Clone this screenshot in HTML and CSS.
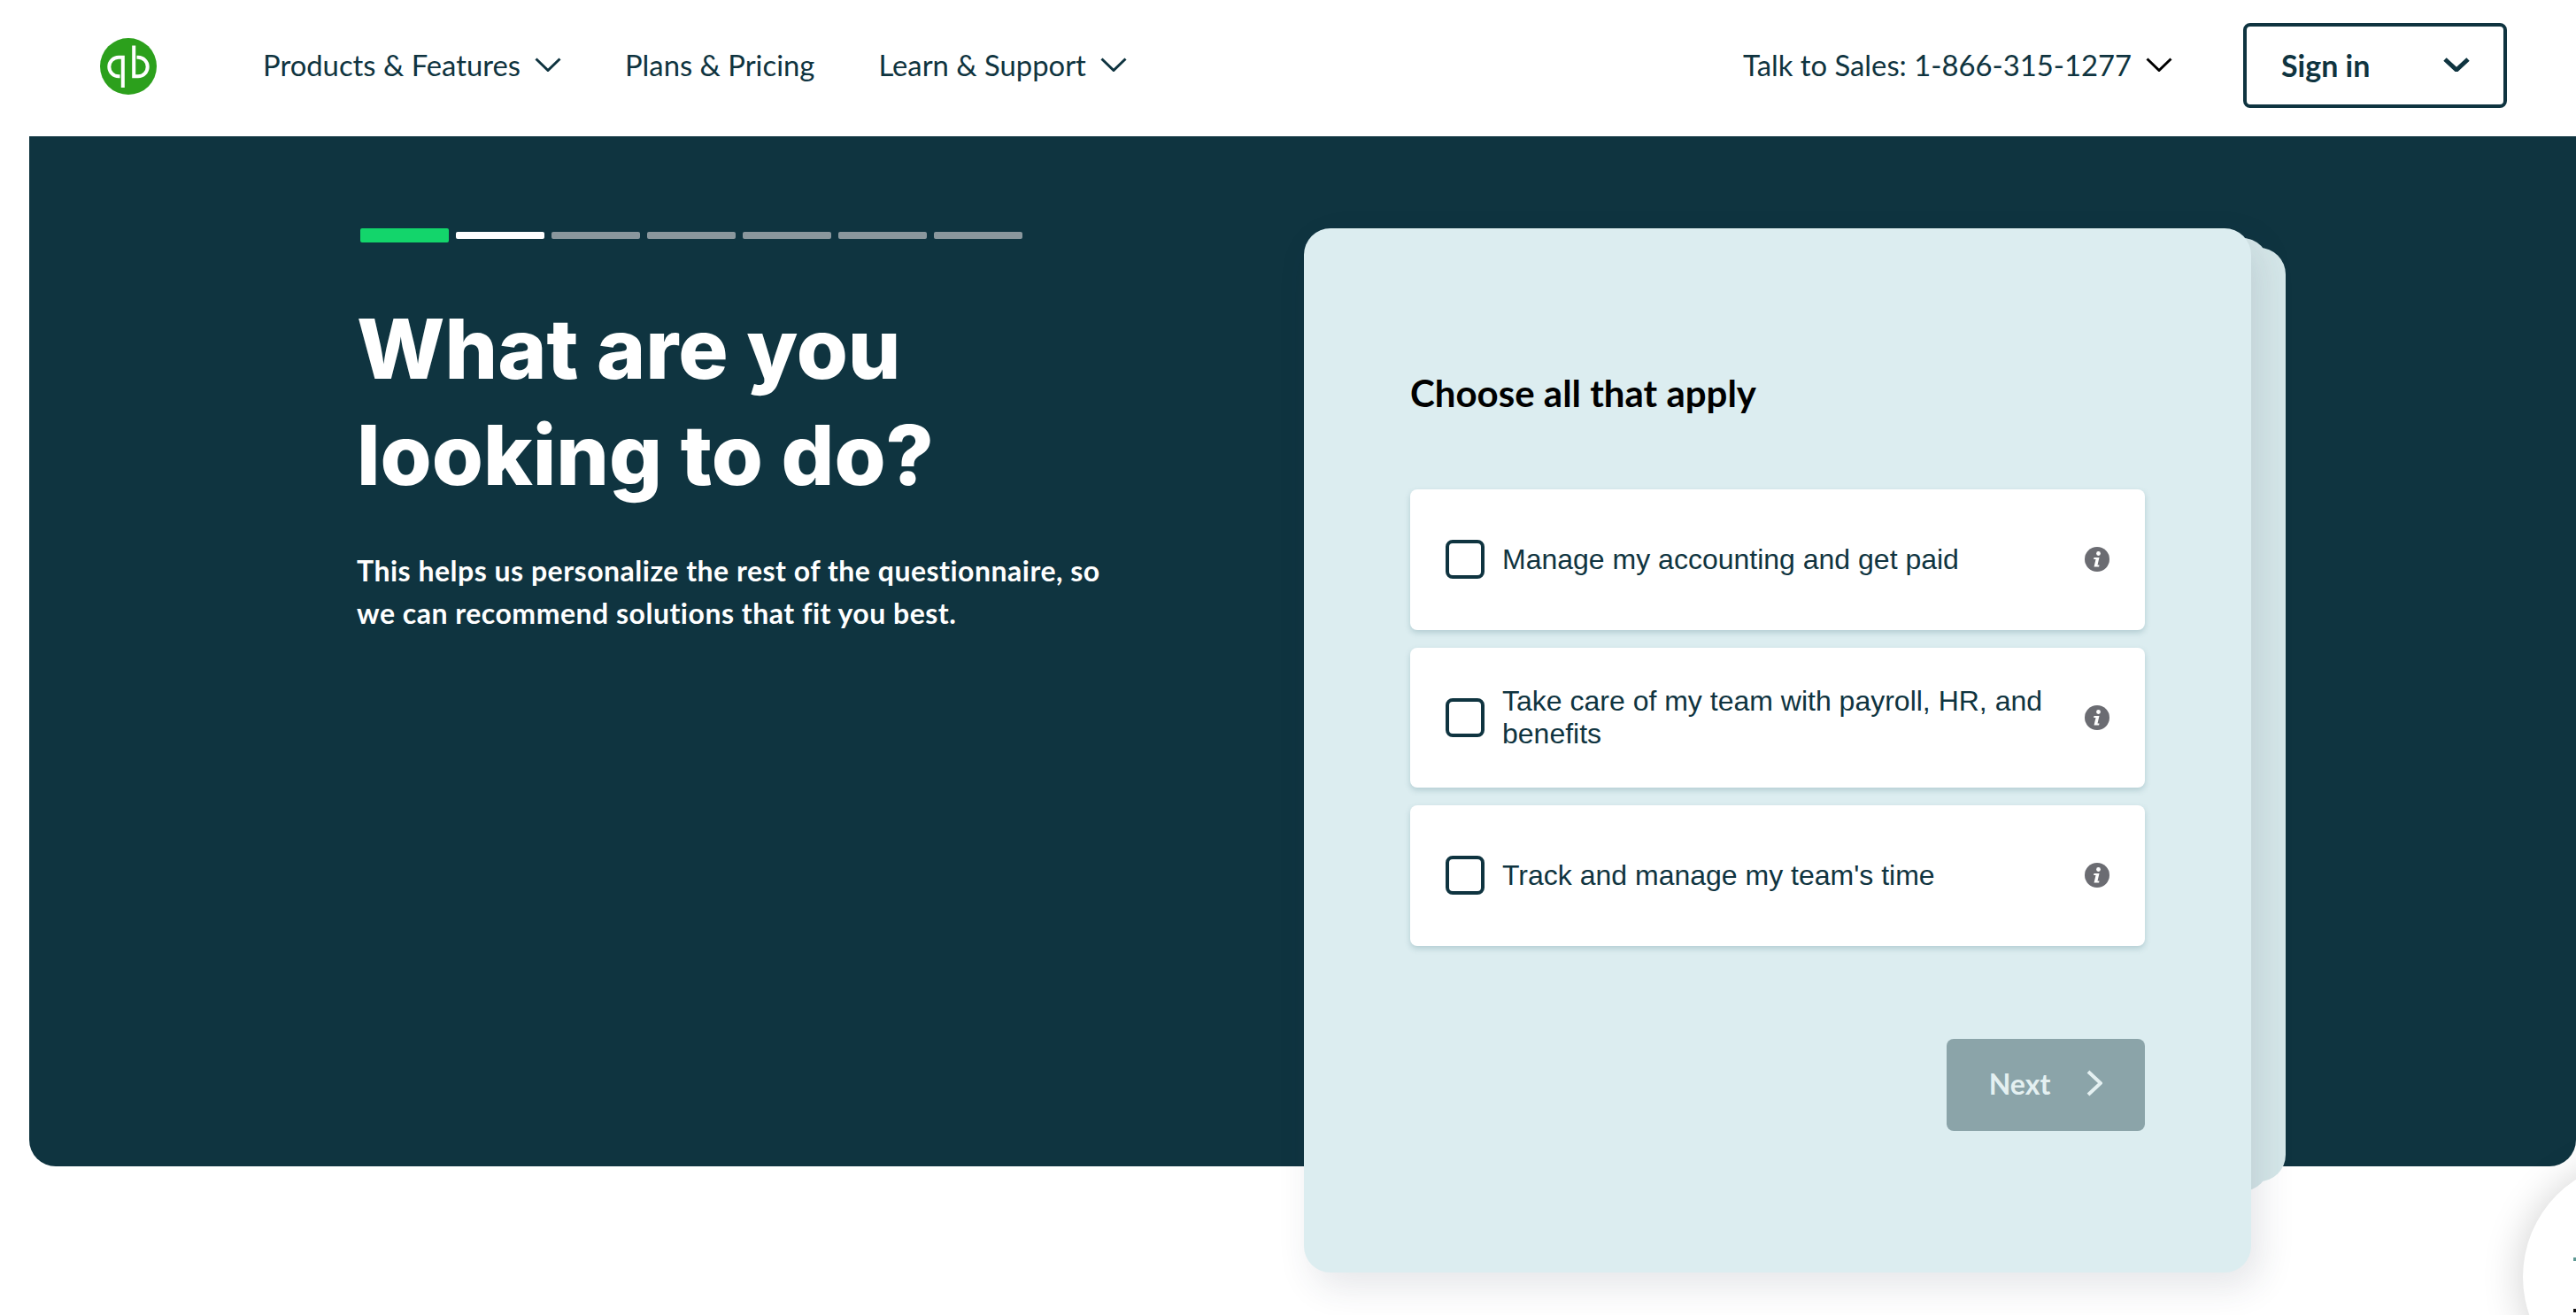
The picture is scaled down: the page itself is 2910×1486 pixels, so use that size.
FILE: index.html
```html
<!DOCTYPE html>
<html lang="en">

<head>
  <meta charset="UTF-8">
  <meta name="viewport" content="width=device-width, initial-scale=1.0">
  <title>QuickBooks</title>
  <link rel="stylesheet" href="styles.css">
</head>

<body>
  <header class="site-header">
    <svg class="logo" viewBox="0 0 64 64" aria-label="QuickBooks">
      <circle cx="32" cy="32" r="32" fill="#2ca01c" />
      <path d="M25.800 56V21.800H21a10.700 10.700 0 0 0 0 21.400h1.500" />
      <path d="M38.200 8.500V43.200H43a10.700 10.700 0 0 0 0-21.400h-1.500" />
    </svg>
    <nav class="main-nav">
      <a class="nav-link">Products &amp; Features
        <svg class="chevron" viewBox="0 0 30 16"><path d="M1.500 1.500 15 14.500 28.500 1.500" /></svg>
      </a>
      <a class="nav-link">Plans &amp; Pricing</a>
      <a class="nav-link">Learn &amp; Support
        <svg class="chevron" viewBox="0 0 30 16"><path d="M1.500 1.500 15 14.500 28.500 1.500" /></svg>
      </a>
    </nav>
    <a class="nav-link sales-link">Talk to Sales: 1-866-315-1277
      <svg class="chevron chevron-dark" viewBox="0 0 30 16"><path d="M1.500 1.500 15 14.500 28.500 1.500" /></svg>
    </a>
    <button class="sign-in" type="button">
      <span>Sign in</span>
      <svg class="chevron chevron-bold" viewBox="0 0 30 16"><path d="M2 2 15 14 28 2" /></svg>
    </button>
  </header>

  <main class="hero">
    <section class="intro">
      <div class="progress">
        <span class="step step-done"></span>
        <span class="step step-current"></span>
        <span class="step"></span>
        <span class="step"></span>
        <span class="step"></span>
        <span class="step"></span>
        <span class="step"></span>
      </div>
      <h1>What are you<br>looking to do?</h1>
      <p>This helps us personalize the rest of the questionnaire, so<br>we can recommend solutions that fit you best.</p>
    </section>

    <section class="card-stack">
      <div class="sheet sheet-back"></div>
      <div class="sheet sheet-middle"></div>
      <div class="card">
        <h2>Choose all that apply</h2>
        <div class="options">
          <label class="option">
            <span class="checkbox"></span>
            <span class="option-text">Manage my accounting and get paid</span>
            <svg class="info" viewBox="0 0 28 28"><circle cx="14" cy="14" r="14" /><circle cx="15.500" cy="7.500" r="2.400" fill="#fff" /><path d="M10.500 12h6l-2 8.500h2l-.4 2h-5.600l2-8.500h-2.400z" fill="#fff" /></svg>
          </label>
          <label class="option">
            <span class="checkbox"></span>
            <span class="option-text">Take care of my team with payroll, HR, and benefits</span>
            <svg class="info" viewBox="0 0 28 28"><circle cx="14" cy="14" r="14" /><circle cx="15.500" cy="7.500" r="2.400" fill="#fff" /><path d="M10.500 12h6l-2 8.500h2l-.4 2h-5.600l2-8.500h-2.400z" fill="#fff" /></svg>
          </label>
          <label class="option">
            <span class="checkbox"></span>
            <span class="option-text">Track and manage my team's time</span>
            <svg class="info" viewBox="0 0 28 28"><circle cx="14" cy="14" r="14" /><circle cx="15.500" cy="7.500" r="2.400" fill="#fff" /><path d="M10.500 12h6l-2 8.500h2l-.4 2h-5.600l2-8.500h-2.400z" fill="#fff" /></svg>
          </label>
        </div>
        <div class="card-footer">
          <button class="next" type="button">
            Next
            <svg viewBox="0 0 18 30"><path d="M2 2 16 15 2 28" /></svg>
          </button>
        </div>
      </div>
    </section>
  </main>

  <div class="chat-corner">
    <div class="chat-bubble"></div>
    <span class="chat-mark chat-mark-teal"></span>
    <span class="chat-mark chat-mark-black"></span>
  </div>
</body>

</html>
```

FILE: styles.css
```css
html,
body {
  margin: 0;
  padding: 0;
  height: 100%;
  overflow: hidden;
  background-color: #fff;
}

body {
  position: relative;
  font-family: "Lato", "Liberation Sans", sans-serif;
  color: #0f3440;
}

.site-header {
  height: 154px;
  display: flex;
  align-items: center;
  padding: 0 78px 6px 113px;
  box-sizing: border-box;
}

.logo {
  width: 64px;
  height: 64px;
  margin-right: 120px;
  margin-top: 2px;
  flex: none;
  fill: none;
  stroke: #fff;
  stroke-width: 4;
}

.logo circle {
  stroke: none;
}

.main-nav {
  display: flex;
  align-items: center;
  gap: 72px;
}

.nav-link {
  display: flex;
  align-items: center;
  gap: 16px;
  padding-bottom: 2px;
  font-size: 32.800px;
  white-space: nowrap;
}

.sales-link {
  margin-left: auto;
  margin-right: 80px;
}

.chevron {
  width: 30px;
  height: 16px;
  fill: none;
  stroke: #0f3440;
  stroke-width: 3;
}

.chevron-dark {
  stroke: #000;
}

.chevron-bold {
  stroke-width: 5;
}

.sign-in {
  width: 298px;
  height: 96px;
  display: flex;
  align-items: center;
  justify-content: space-between;
  padding: 0 38px 2px 39px;
  background-color: #fff;
  border: 4px solid #0f3440;
  border-radius: 8px;
  font-family: inherit;
  font-size: 34px;
  font-weight: 700;
  color: #0f3440;
}

.hero {
  height: 1164px;
  margin-left: 33px;
  display: flex;
  background-color: #0f3440;
  border-radius: 0 0 30px 30px;
}

.intro {
  width: 1440px;
  padding: 104px 0 0 370px;
  box-sizing: border-box;
  color: #fff;
}

.progress {
  display: flex;
  align-items: center;
  gap: 8px;
  margin-left: 4px;
}

.step {
  width: 100px;
  height: 8px;
  border-radius: 2px;
  background-color: #8a979d;
}

.step-done {
  height: 16px;
  background-color: #13d56b;
}

.step-current {
  background-color: #fff;
}

h1 {
  margin: 60px 0 0;
  font-family: "Inter", "Lato", sans-serif;
  font-size: 94px;
  line-height: 120px;
  font-weight: 800;
}

.intro p {
  margin: 47px 0 0;
  font-size: 32px;
  line-height: 48px;
  font-weight: 700;
  letter-spacing: 0.500px;
}

.card-stack {
  position: relative;
  width: 1070px;
  height: 1180px;
  margin-top: 104px;
}

.sheet {
  position: absolute;
  border-radius: 30px;
}

.sheet-back {
  top: 22px;
  right: -39px;
  bottom: 103px;
  width: 200px;
  background-color: #d5e7e9;
}

.sheet-middle {
  top: 11px;
  right: -20px;
  bottom: 92px;
  width: 200px;
  background-color: #d5e7e9;
}

.card {
  position: relative;
  height: 100%;
  padding: 156px 120px 0;
  box-sizing: border-box;
  background-color: #dcedf0;
  border-radius: 30px;
  box-shadow: 10px 16px 40px rgba(40, 50, 70, 0.12);
}

h2 {
  margin: 0;
  font-size: 42px;
  line-height: 60px;
  font-weight: 700;
  color: #000;
}

.options {
  display: flex;
  flex-direction: column;
  gap: 20px;
  margin-top: 79px;
}

.option {
  height: 158.500px;
  display: flex;
  align-items: center;
  padding: 0 40px;
  background-color: #fff;
  border-radius: 8px;
  box-shadow: 0 3px 6px rgba(60, 110, 125, 0.25);
}

.checkbox {
  width: 44px;
  height: 44px;
  margin-right: 20px;
  flex: none;
  box-sizing: border-box;
  border: 4px solid #0f3440;
  border-radius: 8px;
}

.option-text {
  flex: 1;
  font-family: "Liberation Sans", Arial, sans-serif;
  font-size: 32px;
  line-height: 37px;
  padding-right: 40px;
}

.info {
  width: 28px;
  height: 28px;
  flex: none;
  fill: #6b6c72;
}

.card-footer {
  display: flex;
  justify-content: flex-end;
  margin-top: 105px;
}

.next {
  width: 224px;
  height: 104px;
  display: flex;
  align-items: center;
  justify-content: center;
  gap: 41px;
  padding-bottom: 4px;
  background-color: #8ba4a9;
  border: 0;
  border-radius: 8px;
  font-family: inherit;
  font-size: 32px;
  font-weight: 700;
  color: #e4f0f1;
}

.next svg {
  width: 18px;
  height: 30px;
  fill: none;
  stroke: #e4f0f1;
  stroke-width: 4;
}

.chat-corner {
  position: absolute;
  right: 0;
  bottom: 0;
  width: 140px;
  height: 230px;
  overflow: hidden;
}

.chat-bubble {
  width: 262px;
  height: 262px;
  margin: 56px 0 0 80px;
  border-radius: 50%;
  background-color: #fff;
  box-shadow: -6px 0 40px rgba(0, 0, 0, 0.15);
}

.chat-mark {
  position: absolute;
  right: 0;
  width: 3px;
}

.chat-mark-teal {
  bottom: 61px;
  height: 4px;
  background-color: #5d9a94;
}

.chat-mark-black {
  bottom: 3px;
  height: 4px;
  background-color: #111;
}
```
